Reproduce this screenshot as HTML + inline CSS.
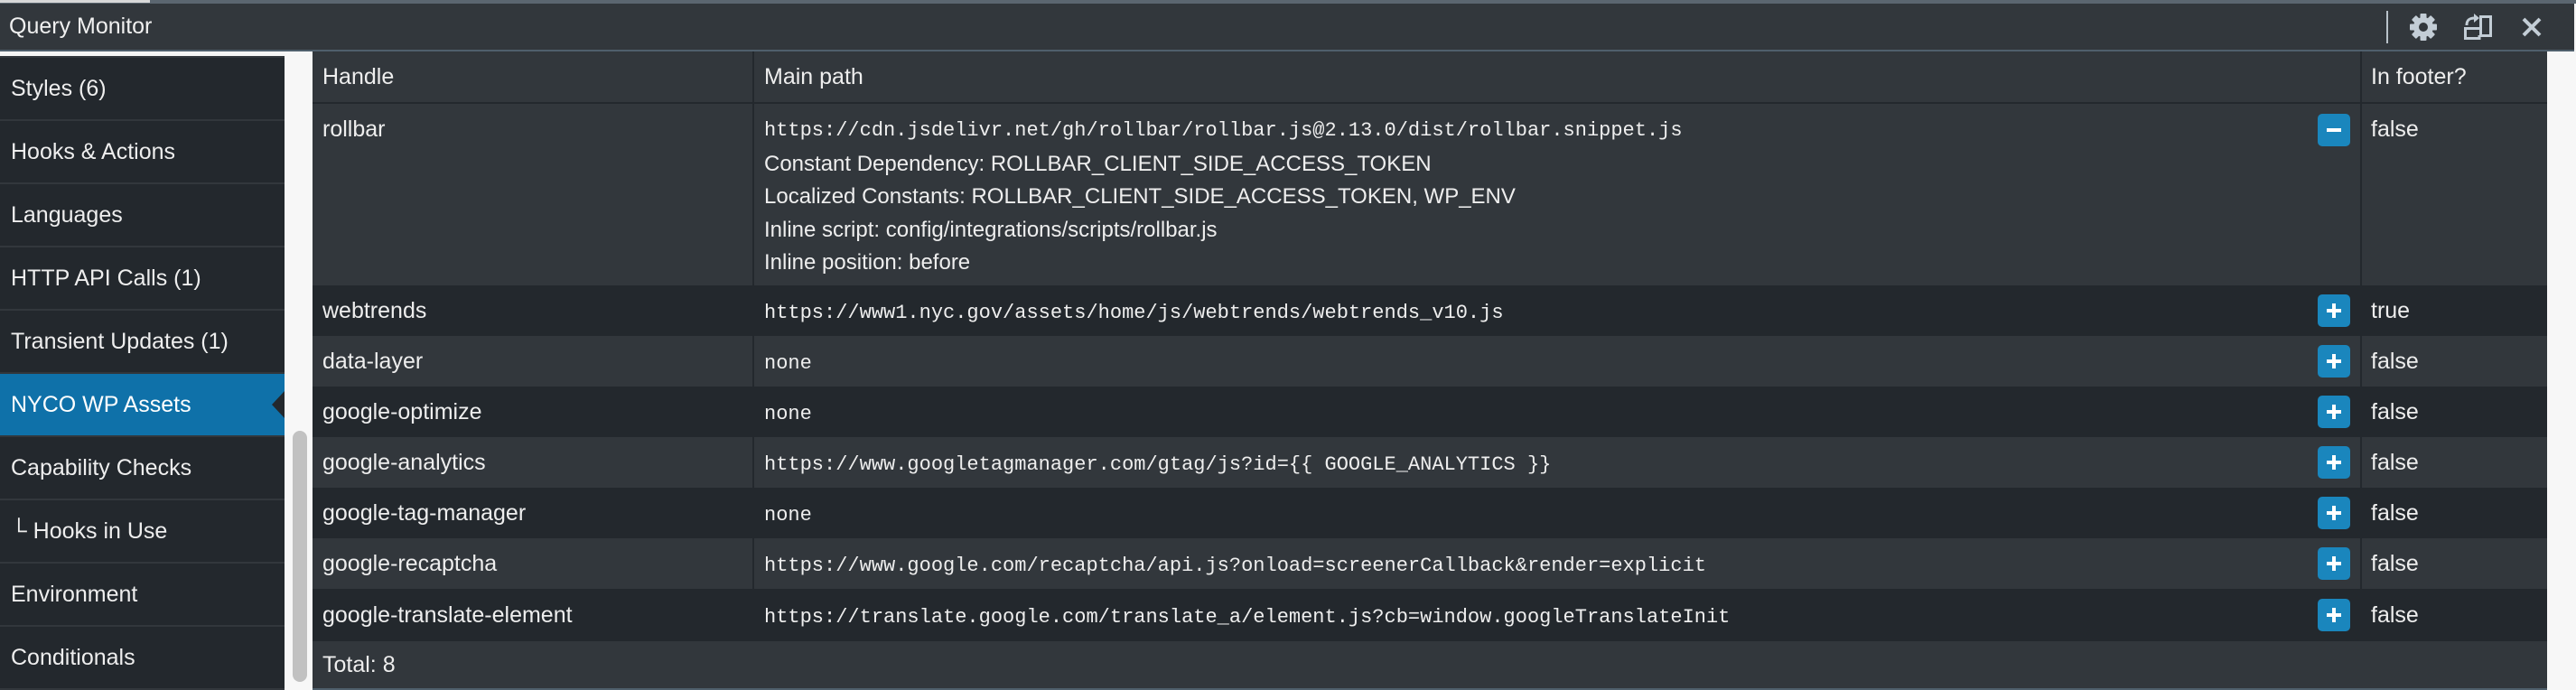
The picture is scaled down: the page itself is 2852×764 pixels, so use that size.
<!DOCTYPE html>
<html><head><meta charset="utf-8"><style>
*{margin:0;padding:0;box-sizing:border-box}
html,body{width:2852px;height:764px;overflow:hidden;background:#f5f5f5}
body{position:relative;font-family:"Liberation Sans",sans-serif;color:#eeeeee}
#top{position:absolute;left:0;top:0;width:2852px;height:4px;background:#5b6670}
#topl{position:absolute;left:0;top:0;width:166px;height:3px;background:#d8d8d8}
#bar{position:absolute;left:0;top:4px;width:2850px;height:53px;background:#32373c;border-bottom:2px solid #4f5f6c}
#bar .t{position:absolute;left:10px;top:0;line-height:51px;font-size:25px;color:#f0f0f0}
#side{position:absolute;left:0;top:62px;width:315px;height:702px;background:#32373c}
.it{position:absolute;left:0;width:315px;height:68px;background:#23282d;font-size:25px;line-height:68px;padding-left:12px;color:#eee}
.it.a{background:#0f71a9;color:#fff}
.arrow{position:absolute;right:0;top:19px;width:0;height:0;border-top:15px solid transparent;border-bottom:15px solid transparent;border-right:14px solid #23282d}
#gut{position:absolute;left:315px;top:57px;width:31px;height:707px;background:#f7f7f7}
#thumb{position:absolute;left:324px;top:477px;width:16px;height:278px;background:#c1c1c1;border-radius:8px}
#gutr{position:absolute;left:2820px;top:57px;width:32px;height:707px;background:#f7f7f7}
#tbl{position:absolute;left:346px;top:57px;width:2474px;height:707px;background:#32373c}
.r{position:absolute;left:0;width:2474px}
.l{background:#32373c}.d{background:#23282d}
.c{position:absolute;top:0;bottom:0;padding-left:11px;font-size:25px}
.c1{left:0;width:487px}
.c2{left:487px;width:1780px;border-left:2px solid #23282d}
.c3{left:2267px;width:207px;border-left:2px solid #23282d;padding-left:10px}
.one{line-height:56px}
.m{font-family:"Liberation Mono",monospace;font-size:22px}
.btn{position:absolute;left:2220px;width:36px;height:36px;background:#1a86bd;border-radius:5px}
.btn::before{content:"";position:absolute;left:10px;top:16px;width:16px;height:4px;background:#fff}
.btn.p::after{content:"";position:absolute;left:16px;top:10px;width:4px;height:16px;background:#fff}
</style></head><body>
<div id="top"></div><div id="topl"></div>
<div id="bar"><div class="t">Query Monitor</div>
<svg style="position:absolute;left:0;top:-4px" width="2850" height="57">
<rect x="2642" y="12" width="2" height="36" fill="#b9c2ca"/>
<g fill="#c3cdd6" transform="translate(2683 30)">
<circle r="11"/>
<g><rect x="-3.5" y="-15" width="7" height="7" rx="1"/><rect x="-3.5" y="8" width="7" height="7" rx="1"/><rect x="-15" y="-3.5" width="7" height="7" rx="1"/><rect x="8" y="-3.5" width="7" height="7" rx="1"/></g>
<g transform="rotate(45)"><rect x="-3.5" y="-15" width="7" height="7" rx="1"/><rect x="-3.5" y="8" width="7" height="7" rx="1"/><rect x="-15" y="-3.5" width="7" height="7" rx="1"/><rect x="8" y="-3.5" width="7" height="7" rx="1"/></g>
<circle r="5" fill="#32373c"/>
</g>
<g fill="none" stroke="#c3cdd6" stroke-width="3">
<rect x="2746.5" y="18.5" width="11" height="21"/>
<path d="M2745 31.5H2729.5V42.5H2745V39"/>
<path d="M2731 28 C2731 22 2734 20 2740 20"/>
</g>
<path d="M2739 15 L2745 20 L2739 25Z" fill="#c3cdd6"/>
<path d="M2794 21L2812 39M2812 21L2794 39" stroke="#c3cdd6" stroke-width="4"/>
</svg>
</div>
<div id="side">
<div class="it" style="top:2px">Styles (6)</div>
<div class="it" style="top:72px">Hooks &amp; Actions</div>
<div class="it" style="top:142px">Languages</div>
<div class="it" style="top:212px">HTTP API Calls (1)</div>
<div class="it" style="top:282px">Transient Updates (1)</div>
<div class="it a" style="top:352px">NYCO WP Assets<div class="arrow"></div></div>
<div class="it" style="top:422px">Capability Checks</div>
<div class="it" style="top:492px">└ Hooks in Use</div>
<div class="it" style="top:562px">Environment</div>
<div class="it" style="top:632px">Conditionals</div>
</div>
<div id="gut"></div><div id="thumb"></div><div id="gutr"></div>
<div id="tbl">
<div class="r l" style="top:0;height:58px;border-bottom:2px solid #23282d"><div class="c c1 one">Handle</div><div class="c c2 one">Main path</div><div class="c c3 one">In footer?</div></div>
<div class="r l" style="top:58px;height:201px"><div class="c c1" style="line-height:36.6px;padding-top:10px">rollbar</div>
<div class="c c2" style="line-height:36.6px;padding-top:12px;font-size:24px"><div class="m">https://cdn.jsdelivr.net/gh/rollbar/rollbar.js@2.13.0/dist/rollbar.snippet.js</div>Constant Dependency: ROLLBAR_CLIENT_SIDE_ACCESS_TOKEN<br>Localized Constants: ROLLBAR_CLIENT_SIDE_ACCESS_TOKEN, WP_ENV<br>Inline script: config/integrations/scripts/rollbar.js<br>Inline position: before</div>
<div class="c c3" style="line-height:36.6px;padding-top:10px">false</div><div class="btn" style="top:11px"></div></div>
<div class="r d" style="top:259px;height:56px"><div class="c c1 one">webtrends</div><div class="c c2 one"><span class="m">https://www1.nyc.gov/assets/home/js/webtrends/webtrends_v10.js</span></div><div class="c c3 one">true</div><div class="btn p" style="top:10px"></div></div>
<div class="r l" style="top:315px;height:56px"><div class="c c1 one">data-layer</div><div class="c c2 one"><span class="m">none</span></div><div class="c c3 one">false</div><div class="btn p" style="top:10px"></div></div>
<div class="r d" style="top:371px;height:56px"><div class="c c1 one">google-optimize</div><div class="c c2 one"><span class="m">none</span></div><div class="c c3 one">false</div><div class="btn p" style="top:10px"></div></div>
<div class="r l" style="top:427px;height:56px"><div class="c c1 one">google-analytics</div><div class="c c2 one"><span class="m">https://www.googletagmanager.com/gtag/js?id={{ GOOGLE_ANALYTICS }}</span></div><div class="c c3 one">false</div><div class="btn p" style="top:10px"></div></div>
<div class="r d" style="top:483px;height:56px"><div class="c c1 one">google-tag-manager</div><div class="c c2 one"><span class="m">none</span></div><div class="c c3 one">false</div><div class="btn p" style="top:10px"></div></div>
<div class="r l" style="top:539px;height:56px"><div class="c c1 one">google-recaptcha</div><div class="c c2 one"><span class="m">https://www.google.com/recaptcha/api.js?onload=screenerCallback&amp;render=explicit</span></div><div class="c c3 one">false</div><div class="btn p" style="top:10px"></div></div>
<div class="r d" style="top:595px;height:58px"><div class="c c1" style="line-height:58px">google-translate-element</div><div class="c c2" style="line-height:58px"><span class="m">https://translate.google.com/translate_a/element.js?cb=window.googleTranslateInit</span></div><div class="c c3" style="line-height:58px">false</div><div class="btn p" style="top:11px"></div></div>
<div class="r l" style="top:653px;height:54px;border-bottom:2px solid #4f5f6c"><div class="c c1" style="line-height:52px;width:800px">Total: 8</div></div>
</div>
</body></html>
